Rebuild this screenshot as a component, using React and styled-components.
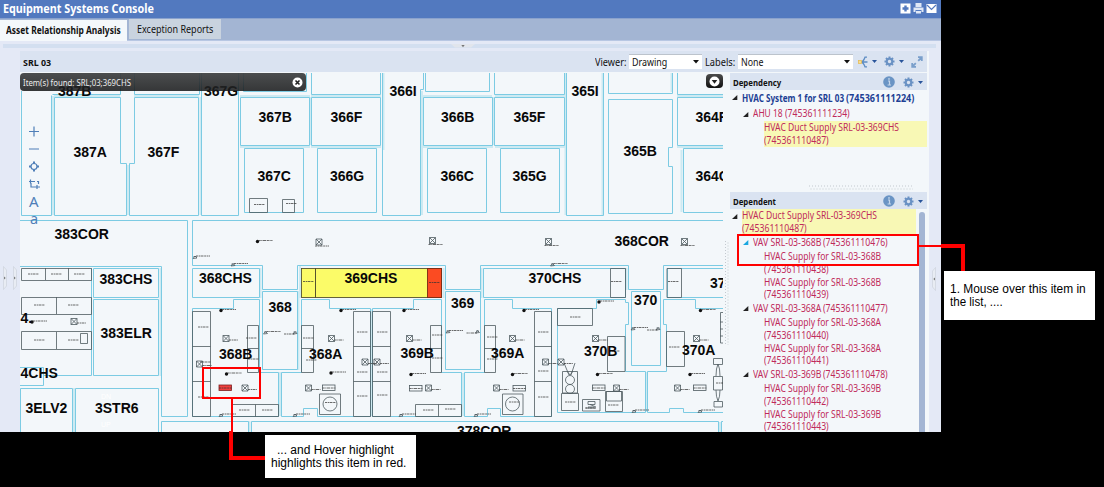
import React, { useLayoutEffect, useRef } from "react";
import styled, { createGlobalStyle } from "styled-components";

const Global = createGlobalStyle`
  * { box-sizing: border-box; }
  html, body { margin: 0; height: 487px; background: #000; overflow: hidden; }
  body { font-family: "Noto Sans", "Open Sans", sans-serif; font-size: 10.2px; color: #111; }
`;

/* Condensed text: set on one line and narrowed to the given width. */
const FitBox = styled.span`
  display: inline-block;
  width: ${(p) => p.$w}px;
  white-space: pre;
`;
const FitInner = styled.span`
  display: inline-block;
  transform-origin: 0 50%;
`;
const Fit = ({ w, children }) => {
  const ref = useRef(null);
  useLayoutEffect(() => {
    const el = ref.current;
    el.style.transform = `scaleX(${w / el.offsetWidth})`;
  }, [w, children]);
  return <FitBox $w={w}><FitInner ref={ref}>{children}</FitInner></FitBox>;
};

const Stage = styled.div`
  position: relative;
  width: 1104px;
  height: 487px;
  background: #000;
  overflow: hidden;
`;
const Console = styled.main`
  display: flex;
  flex-direction: column;
  width: 941px;
  height: 432px;
  overflow: hidden;
  background: #e4e9f6;
`;
const TitleBar = styled.header`
  display: flex;
  flex: none;
  align-items: center;
  height: 18px;
  padding: 0 4px 2px 3px;
  background: #5279bf;
  color: #fff;
`;
const Title = styled.h1`
  flex: 1;
  margin: 2px 0 0;
  font-size: 12.2px;
  line-height: 16px;
`;
const TitleIcons = styled.div`
  display: flex;
  gap: 2px;
  svg { display: block; }
`;
const Tabs = styled.nav`
  display: flex;
  flex: none;
  align-items: flex-end;
  gap: 2px;
  height: 23px;
  border-top: 1px solid #8aa2cd;
  border-bottom: 1px solid #b8c7e3;
  background: #a3b5d3;
`;
const Tab = styled.div`
  width: ${(p) => p.$w}px;
  height: ${(p) => (p.$active ? 21 : 20)}px;
  margin-bottom: ${(p) => (p.$active ? -1 : 1)}px;
  padding-left: ${(p) => (p.$active ? 6 : 8)}px;
  line-height: ${(p) => (p.$active ? 20 : 21)}px;
  font-weight: ${(p) => (p.$active ? 700 : 400)};
  white-space: nowrap;
  background: ${(p) => (p.$active ? "#f4f8fb" : "#c9d3df")};
`;
const TopSplitter = styled.div`
  display: flex;
  flex: none;
  justify-content: center;
  height: 4px;
  margin: 3px 5px 3px 3px;
  padding-right: 14px;
  background: #d3dff0;
`;
const Work = styled.div`
  display: flex;
  flex: 1;
  min-height: 0;
`;
const SideRail = styled.div`
  display: flex;
  flex: none;
  align-items: flex-start;
  justify-content: ${(p) => (p.$right ? "center" : "space-between")};
  width: ${(p) => (p.$right ? 12 : 20)}px;
  padding: ${(p) => (p.$right ? "216px 2px 0 0" : "215px 3px 0 3px")};
`;
const Content = styled.section`
  display: flex;
  flex-direction: column;
  width: 909px;
  background: #f3f7fa;
`;
const Toolbar = styled.div`
  display: flex;
  flex: none;
  align-items: center;
  width: 907px;
  height: 21px;
  padding: 0 4px 0 3px;
  background: #dae3f1;
`;
const DrawingName = styled.div`
  width: 572px;
  padding-top: 1px;
  font-size: 9.5px;
  font-weight: 700;
`;
const FieldLabel = styled.label`
  width: ${(p) => p.$w}px;
  padding-top: 1px;
  white-space: nowrap;
`;
const Select = styled.div`
  display: flex;
  align-items: center;
  justify-content: space-between;
  width: ${(p) => p.$w}px;
  height: 15px;
  margin-right: ${(p) => p.$mr}px;
  padding: 0 3px 0 3px;
  background: #fff;
  border-top: 1px solid #bcc3cc;
`;
const ToolIcons = styled.div`
  display: flex;
  flex: 1;
  align-items: center;
  justify-content: space-between;
`;
const Panes = styled.div`
  display: flex;
  flex: 1;
  min-height: 0;
  padding-top: 1px;
`;
const MapPane = styled.div`
  position: relative;
  width: 703px;
  height: 359px;
  overflow: hidden;
`;
const Toast = styled.div`
  position: absolute;
  left: 0;
  top: 0;
  display: flex;
  align-items: center;
  justify-content: space-between;
  width: 286px;
  height: 18px;
  padding: 0 3px;
  border-radius: 4px;
  color: #ececec;
  font-size: 9.3px;
  background: linear-gradient(rgba(66,68,69,.95), rgba(22,23,24,.86));
`;
const MapMenu = styled.div`
  position: absolute;
  left: 686px;
  top: 1px;
  display: flex;
  align-items: center;
  justify-content: center;
  width: 17px;
  height: 14px;
  border-radius: 4px;
  background: linear-gradient(#4c4c4c, #111);
`;
const MapTools = styled.div`
  position: absolute;
  left: 6px;
  top: 50px;
  display: flex;
  flex-direction: column;
  width: 16px;
  svg { display: block; }
`;
const VSplitter = styled.div`
  width: 7px;
  padding: 168px 0 0 1px;
`;
const TreePane = styled.div`
  display: flex;
  flex-direction: column;
  width: 199px;
`;
const PaneHeader = styled.div`
  display: flex;
  flex: none;
  align-items: center;
  justify-content: space-between;
  width: 197px;
  height: 17px;
  padding: 1px 4px 0 3px;
  font-size: 9.6px;
  font-weight: 700;
  background: #dae3f1;
`;
const HeaderIcons = styled.div`
  display: flex;
  align-items: center;
  gap: 8px;
`;
const HSplitter = styled.div`
  display: flex;
  flex: none;
  justify-content: center;
  align-items: flex-end;
  height: ${(p) => p.$h}px;
  padding: 0 0 2px 64px;
`;
const TreeBody = styled.div`
  display: flex;
  flex: 1;
  min-height: 0;
`;
const Tree = styled.div`
  width: ${(p) => p.$w}px;
`;
const Node = styled.div`
  display: flex;
  height: ${(p) => p.$h}px;
  padding-left: ${(p) => 2 + p.$level * 11}px;
  color: ${(p) => (p.$root ? "#1d3f94" : "#bf2a5b")};
  font-weight: ${(p) => (p.$root ? 700 : 400)};
`;
const Twisty = styled.span`
  flex: none;
  width: 9.5px;
  padding: 5px 0 0 0;
  svg { display: block; }
`;
const NodeText = styled.span`
  flex: 1;
  padding-top: ${(p) => p.$pt || 0}px;
  font-size: 10px;
  line-height: 12.67px;
  white-space: nowrap;
  background: ${(p) => (p.$hit ? "#f8f8b5" : "transparent")};
`;
const TextLine = styled.div`
  display: flex;
  height: 12.67px;
`;
const Scroll = styled.div`
  width: 6px;
  margin: 3px 0 0 3px;
  border-radius: 3px 3px 0 0;
  background: #a3b5d3;
`;
const Outline = styled.div`
  position: absolute;
  left: ${(p) => p.$x}px;
  top: ${(p) => p.$y}px;
  width: ${(p) => p.$w}px;
  height: ${(p) => p.$h}px;
  border: 2px solid #f00;
`;
const Connector = styled.div`
  position: absolute;
  left: ${(p) => p.$x}px;
  top: ${(p) => p.$y}px;
  width: ${(p) => p.$w}px;
  height: ${(p) => p.$h}px;
  background: #f00;
`;
const Callout = styled.div`
  position: absolute;
  left: ${(p) => p.$x}px;
  top: ${(p) => p.$y}px;
  width: ${(p) => p.$w}px;
  height: ${(p) => p.$h}px;
  padding: ${(p) => p.$pad};
  background: #fff;
  color: #000;
  font: 12px/13px "Liberation Sans", Arial, sans-serif;
  white-space: nowrap;
`;
const CalloutLine = styled.div`
  height: 13px;
  padding-left: ${(p) => p.$in || 0}px;
`;

/* ---------- icons ---------- */
const Caret = ({ c = "#111", w = 6 }) => (
  <svg width={w} height={w / 2 + 0.5} viewBox="0 0 6 3.5"><path d="M0 0H6L3 3.5Z" fill={c} /></svg>
);
const Gear = () => (
  <svg width="11" height="11" viewBox="-5.5 -5.5 11 11">
    <g stroke="#6a92c4" strokeWidth="2">
      <path d="M0-5V5M-5 0H5M-3.5-3.5L3.5 3.5M-3.5 3.5L3.5-3.5" />
    </g>
    <circle r="2.7" fill="#dae3f1" stroke="#6a92c4" strokeWidth="2" />
  </svg>
);
const GearMenu = styled.span`
  display: flex;
  align-items: center;
  gap: 4px;
`;
const Info = () => (
  <svg width="12" height="12" viewBox="0 0 12 12">
    <circle cx="6" cy="6" r="5.8" fill="#6a94c4" />
    <path d="M5 5H6.5V8.7M4.6 9H8" stroke="#c5d6ea" strokeWidth="1.2" fill="none" />
    <rect x="5.2" y="2.2" width="1.6" height="1.5" fill="#c5d6ea" />
  </svg>
);
const Relations = () => (
  <svg width="10" height="12" viewBox="0 0 10 12">
    <path d="M2.5 6H9.5M3 6Q5.5 5.5 7 1.2H9M3 6Q5.5 6.5 7 10.8H9" fill="none" stroke="#5e8dc3" strokeWidth="1.3" />
    <rect x=".5" y="4.5" width="3" height="3" fill="#f7dc93" stroke="#e5bd59" strokeWidth=".8" />
  </svg>
);
const Expand = () => (
  <svg width="12" height="12" viewBox="0 0 12 12" fill="none" stroke="#7a9fcb" strokeWidth="1.8">
    <path d="M7 1.2H10.8V5M10.5 1.5L7.2 4.8M1.2 7V10.8H5M1.5 10.5L4.8 7.2" />
  </svg>
);
const TwistyIcon = ({ c = "#222" }) => (
  <svg width="6" height="5" viewBox="0 0 6 5"><path d="M5.3 0V5H0Z" fill={c} /></svg>
);
const RailHandle = ({ left }) => (
  <svg width="4" height="24" viewBox="0 0 4 24">
    <path d={left ? "M3.5.5V23.5L.5 20V4Z" : "M.5.5V23.5L3.5 20V4Z"} fill="#e8ecf3" stroke="#cdd3dd" strokeWidth=".7" />
    <path d={left ? "M3 10.5V13.5L1.3 12Z" : "M1 10.5V13.5L2.7 12Z"} fill="#777" />
  </svg>
);

/* ---------- floor plan ---------- */
const ROOMS = [
  "M21.5 91V215.5H51.5V95.5M52.5 94.5H120.5V73", "M54.5 97.5H120.5V163.5H126.5V215.5H54.5Z",
  "M134.5 97.5H198.5V215.5H129.5V163.5H134.5Z", "M134.5 73V94.5H199.5V73", "M201.5 73V215.5H238.5V73",
  "M240.5 97.5H309.5V145.5H240.5Z", "M243.5 73V91.5H306.5V73", "M311.5 97.5H380.5V145.5H311.5Z",
  "M311.5 73V94.5H380.5V73", "M244.5 148.5H303.5V212.5H244.5Z", "M317.5 148.5H376.5V212.5H317.5Z",
  "M382.5 73V215.5H420.5V89.5H423.5V73", "M423.5 97.5H492.5V145.5H423.5Z", "M425.5 73V91.5H489.5V73",
  "M494.5 97.5H564.5V145.5H494.5Z", "M494.5 73V94.5H564.5V73", "M427.5 148.5H486.5V212.5H427.5Z",
  "M500.5 148.5H559.5V212.5H500.5Z", "M566.5 73V215.5H603.5V73", "M608.5 73V93.5H672.5V73",
  "M608.5 99.5H672.5V147.5H668.5V166.5H672.5V213.5H608.5Z", "M677.5 73V94.5H724", "M724 97.5H677.5V145.5H724",
  "M724 148.5H683.5V212.5H724",
  "M20 220.5H187.5V416.5H161.5V266.5H20",
  "M724 220.5H192.5V265.5H262.5V289.5H297.5V265.5H445.5V289.5H480.5V265.5H628.5V289.5H663.5V265.5H724",
  "M192.5 268.5H259.5V297.5H192.5Z", "M93.5 268.5H158.5V297.5H93.5Z", "M93.5 299.5H158.5V375.5H93.5Z",
  "M91.5 268V375.5H43.5", "M20 367.5H43.5V385.5H20", "M20.5 432V388.5H72.5V432", "M75.5 432V388.5H158.5V432",
  "M161.5 432V421.5H248.5V432M251.5 432V421.5H718.5V432M723 421.5H721.5V432",
  "M262.5 291.5H297.5V369.5H262.5Z",
  "M192.5 308.5H233.5V299.5H259.5V372.5H278.5V416.5H192.5Z",
  "M301.5 372.5V299.5H329.5V308.5H370.5V416.5H317.5V408.5H303.5V416.5H281.5V372.5H301.5",
  "M372.5 308.5H413.5V299.5H441.5V372.5H461.5V416.5H372.5Z",
  "M445.5 291.5H480.5V369.5H445.5Z",
  "M484.5 372.5V299.5H512.5V308.5H551.5V416.5H500.5V408.5H487.5V416.5H464.5V372.5H484.5",
  "M483.5 268.5H625.5V297.5H483.5Z", "M724 268.5H667.5V297.5H724",
  "M557.5 308.5H596.5V299.5H625.5V302.5H628.5V324.5H625.5V371.5H645.5V412.5H557.5Z",
  "M631.5 291.5H660.5V365.5H631.5Z",
  "M724 308.5H695.5V299.5H663.5V324.5H666.5V371.5H647.5V412.5H669.5V408.5H683.5V412.5H724",
];
const WALLS =
  "M53 96V215M200.5 97V215M128 165V215M54 96H120M134 96H199M240 96H310M311 96H381M310.5 97V145M240 147H310M311 147H381M422 91V215M423 96H492M495 96H565M493.5 97V145M423 147H493M495 147H565M383.5 73V150M565.5 73V215M602.5 73V215M671.5 73V92M677 96H723M677 147H723M681.5 150V212M74 388V432M160.5 268V376M249.5 421V432M280 372V416M463 373V416M646.5 372V412M298.5 291V370M260.5 268V298M300 266V298M481.5 268V298M626.5 268V290M443.5 268V298M720 422V432M371.5 309V416";
const FURNITURE =
  "M21.5 268.5H91.5V280.5H21.5ZM45.5 268V280M68.5 268V280M21.5 297.5H91.5V314.5H21.5ZM56.5 297V314M21.5 331.5H91.5V349.5H21.5ZM56.5 332V349M80.5 333.5H87.5V343.5H80.5Z" +
  "M249.5 198.5H267.5V212.5H249.5ZM282.5 199.5H294.5V212.5H282.5Z" +
  "M192.5 311.5H210.5V416.5H192.5ZM192.5 346.5H210.5M192.5 381.5H210.5M247.5 325.5H258.5V372.5H247.5ZM247.5 348.5H258.5" +
  "M301.5 325.5H313.5V372.5H301.5ZM301.5 348.5H313.5M353.5 311.5H370.5V416.5H353.5ZM353.5 346.5H370.5M353.5 381.5H370.5" +
  "M372.5 311.5H390.5V416.5H372.5ZM372.5 346.5H390.5M372.5 381.5H390.5M430.5 325.5H441.5V372.5H430.5ZM430.5 348.5H441.5" +
  "M484.5 325.5H495.5V372.5H484.5ZM484.5 348.5H495.5M534.5 311.5H551.5V416.5H534.5ZM534.5 346.5H551.5M534.5 381.5H551.5" +
  "M232.5 404.5H278.5V416.5H232.5ZM255.5 404.5V416.5M415.5 404.5H461.5V416.5H415.5ZM438.5 404.5V416.5" +
  "M319.5 394H340.5V414.5H319.5ZM502.5 394H523V414.5H502.5Z" +
  "M557.5 308.5H592.5V325.5H557.5ZM607.5 336.5H625V371.5H607.5ZM666.5 331.5H684.5V366.5H666.5Z" +
  "M610.5 268.5H625.5V297.5H610.5ZM667 268.5H681.5V297.5H667Z" +
  "M562.5 371.5H577.5V393H562.5ZM561.5 393.5H578.5V410.5H561.5ZM564 363L569 375M575 363L571 375M567 371L570 375L573 371" +
  "M582.5 399.5H600V411H582.5ZM605.5 391.5H622.5V411.5H605.5ZM606.5 391.5H621.5V401H606.5ZM588 401.5H595V404.5H588ZM586 408H596M590 404.5L596 407M588 407H594" +
  "M713.5 358.5H722.5V364.5H713.5ZM713.5 376.5H722.5V390H713.5ZM714 401.5H722.5V407H714ZM716 376Q716 368 718 364Q720 368 720 376M716 390Q716 397 718 401Q720 397 720 390" +
  "M723 312.5H720.5V343H723M720 322H723M720 329H723M720 336H723";
const SQUARES = [
  [319, 242], [432.5, 240.5], [548.5, 241.5], [684.5, 241.5], [226, 338.5], [331.5, 338.5], [74, 321.5],
  [199.5, 364], [245, 388], [308.5, 388], [409.5, 338.5], [512.5, 338.5], [595.5, 338.5], [696.5, 338.5],
  [377, 362], [365, 362], [428.5, 388], [496.5, 388], [545.5, 362], [561, 362], [616.5, 388], [677.5, 388],
];
const DOTS = [
  [257.5, 241.5], [221, 310.5], [341, 310.5], [404, 310.5], [524, 310.5], [599, 302], [700.5, 310.5], [32, 322],
  [226.5, 374], [331, 373], [411, 374.5], [512.5, 374.5], [597.5, 374.5], [690, 374.5],
];
const VALVES = [
  [195, 257.5], [233, 265], [552.5, 265], [265.5, 333], [295, 333], [448, 332], [477.5, 332], [633, 329], [658, 329],
  [221, 415.5], [295, 415.5], [401, 415.5], [476, 415.5], [634, 411.5], [700, 411.5],
];
const UNITS = [[219, 385], [322.5, 385], [409.5, 385.5], [513, 385.5], [592.5, 385], [693.5, 385]];
const TAGS = [
  [28, 274], [51, 274], [74, 274], [34, 305], [68, 305], [34, 340], [68, 340], [254, 204.5], [286, 203.5],
  [198, 327], [198, 397], [200, 362], [246, 338], [248, 359], [303, 338], [306, 360], [357, 332], [357, 372], [357, 396],
  [377, 332], [377, 372], [377, 395], [432, 335], [432, 358], [487, 337], [487, 359], [538, 332], [538, 371], [538, 397],
  [239, 410], [262, 410], [423, 410], [445, 409], [570, 317], [609, 351], [669, 347], [303, 281.5], [429, 282.5],
  [611, 281.5], [668, 281.5], [325, 402.5], [509, 402], [565, 402], [585, 408], [608, 405], [716, 383],
];
const LABELS = [
  ["387B", 58, 96], ["367G", 204, 96], ["367B", 258.5, 122], ["366F", 330.5, 122], ["387A", 73.5, 157], ["367F", 147.5, 157],
  ["367C", 257.5, 180.5], ["366G", 330, 180.5], ["366I", 389.5, 96], ["365I", 571.5, 96], ["366B", 441, 122],
  ["365F", 513.5, 122], ["364F", 695.5, 122], ["365B", 623.5, 156], ["366C", 440.5, 180.5], ["365G", 512.5, 180.5],
  ["364C", 695.5, 180.5], ["383COR", 54.5, 238.5], ["368COR", 614.5, 245.5], ["383CHS", 99.5, 283.5], ["368CHS", 199, 283],
  ["369CHS", 344.5, 283], ["370CHS", 528.5, 283], ["371CHS", 710, 287.5], ["368", 268.5, 312], ["369", 451, 307.5],
  ["370", 634, 305], ["4.", 20.5, 323], ["383ELR", 100.5, 338], ["368B", 219, 358.5], ["368A", 309, 358.5],
  ["369B", 400.5, 358], ["369A", 491, 358], ["370B", 584, 356], ["370A", 682, 354.5], ["4CHS", 20.5, 378],
  ["3ELV2", 25.5, 412.5], ["3STR6", 95, 412.5], ["378COR", 457, 435.5],
];
const Plan = styled.svg`
  display: block;
  .room { fill: none; stroke: #7ccbe3; }
  .wall { fill: none; stroke: #cdeaf2; stroke-width: 2; }
  .furn { fill: none; stroke: #4e5a60; stroke-width: .8; }
  .tag { stroke: #333; stroke-width: .9; stroke-dasharray: 2.2 .6 1.2 .5 3 .7; opacity: .8; }
  text { font: bold 14px "Liberation Sans", Arial, sans-serif; fill: #080808; }
  .stairs { font: 7px "Liberation Sans", Arial, sans-serif; fill: #fff; }
`;
const FloorPlan = () => (
  <Plan width="703" height="359" viewBox="20 73 703 359">
    <path className="wall" d={WALLS} />
    <rect x="301.5" y="268.5" width="140" height="29" fill="#fbfb68" stroke="#55522e" strokeWidth=".9" />
    <rect x="427.5" y="268.5" width="14" height="29" fill="#fb4b22" stroke="#7a2b13" strokeWidth=".9" />
    <path d="M315.5 268V298" stroke="#55522e" />
    {ROOMS.map((d) => <path key={d} className="room" d={d} />)}
    <path className="furn" d={FURNITURE} />
    <g className="furn">
      <circle cx="330" cy="404" r="7" /><circle cx="512.5" cy="404" r="7" />
      <circle cx="570" cy="380" r="4.5" /><circle cx="570" cy="389" r="4.5" />
      {SQUARES.map(([x, y]) => (
        <path key={x + "-" + y} d={`M${x - 3} ${y - 3}h6v6h-6zl6 6m0-6l-6 6`} />
      ))}
      {VALVES.map(([x, y]) => (
        <path key={x + "-" + y} d={`M${x - 2} ${y + 1}l2-2.5 2 2zM${x - 1.5} ${y - 1}h3`} />
      ))}
    </g>
    {UNITS.map(([x, y], i) => (
      <rect key={x} x={x} y={y} width="12.5" height="5.5" fill={i ? "none" : "#f0403f"} stroke={i ? "#4e5a60" : "#7c2020"} strokeWidth=".8" />
    ))}
    {DOTS.map(([x, y]) => <circle key={x + "-" + y} cx={x} cy={y} r="1.7" fill="#111" />)}
    <g className="tag">
      {TAGS.map(([x, y]) => <path key={x + "-" + y} d={`M${x} ${y}h11`} />)}
      {SQUARES.map(([x, y], i) => <path key={x + "-" + y} d={i < 4 ? `M${x - 4} ${y + 4}h14` : `M${x + 3} ${y + 1.5}h9`} />)}
      {DOTS.map(([x, y]) => <path key={x + "-" + y} d={`M${x + 1} ${y - 1}h14`} />)}
      {VALVES.map(([x, y]) => <path key={x + "-" + y} d={[295, 477.5, 658].includes(x) && y < 340 ? `M${x - 11} ${y + 1}h11` : `M${x + 1} ${y - 1.5}h14`} />)}
      {UNITS.map(([x, y]) => <path key={x} d={`M${x} ${y + 3}h13`} />)}
    </g>
    {LABELS.map(([t, x, y]) => <text key={t} x={x} y={y}>{t}</text>)}
    <text className="stairs" x="101" y="399">DN</text>
    <text className="stairs" x="101" y="427">UP</text>
  </Plan>
);

/* ---------- trees: each line is a list of [text, width] runs ---------- */
const DUCT = [[["HVAC Duct Supply SRL-03-369CHS", 135]], [["(745361110487)", 65]]];
const DEPENDENCY = [
  { level: 0, h: 17, root: true, open: true, pt: 2, lines: [[["HVAC System 1 for SRL 03 ", 104], ["(745361111224)", 68]]] },
  { level: 1, h: 14, open: true, lines: [[["AHU 18 ", 32], ["(745361111234)", 65]]] },
  { level: 2, h: 26, hit: true, lines: DUCT },
];
const leaf = (room, id) => ({ level: 2, h: 25.33, lines: [[[`HVAC Supply for SRL-03-${room}`, 117]], [[`(${id})`, 65]]] });
const vav = (room, id, hot) => ({ level: 1, h: 15.3, open: true, hot, pt: 1, lines: [[[`VAV SRL-03-${room} `, 70.5], [`(${id})`, 65]]] });
const DEPENDENT = [
  { level: 0, h: 26, open: true, hit: true, lines: DUCT },
  vav("368B", "745361110476", true), leaf("368B", "745361110438"), leaf("368B", "745361110439"),
  vav("368A", "745361110477"), leaf("368A", "745361110440"), leaf("368A", "745361110441"),
  vav("369B", "745361110478"), leaf("369B", "745361110442"), leaf("369B", "745361110443"),
];
const TreeView = ({ items, w }) => (
  <Tree $w={w}>
    {items.map((n, i) => (
      <Node key={i} $h={n.h} $level={n.level} $root={n.root}>
        <Twisty>{n.open && <TwistyIcon c={n.hot ? "#1aa7e0" : "#222"} />}</Twisty>
        <NodeText $hit={n.hit} $pt={n.pt}>
          {n.lines.map((runs, k) => (
            <TextLine key={k}>{runs.map(([t, tw]) => <Fit key={t} w={tw}>{t}</Fit>)}</TextLine>
          ))}
        </NodeText>
      </Node>
    ))}
  </Tree>
);
const PaneTitle = ({ w, children }) => (
  <PaneHeader>
    <Fit w={w}>{children}</Fit>
    <HeaderIcons><Info /><GearMenu><Gear /><Caret w={5} c="#29549a" /></GearMenu></HeaderIcons>
  </PaneHeader>
);

export default function App() {
  return (
    <Stage>
      <Global />
      <Console>
        <TitleBar>
          <Title><Fit w={151}>Equipment Systems Console</Fit></Title>
          <TitleIcons>
            <svg width="11" height="11" viewBox="0 0 11 11"><rect x=".5" y=".5" width="10" height="10" fill="#fff" /><path d="M5.5 2.5V8.5M2.5 5.5H8.5" stroke="#5279bf" strokeWidth="2.4" /></svg>
            <svg width="11" height="11" viewBox="0 0 11 11"><path d="M2.5 0H8.5V4H2.5ZM.5 4.5H10.5V9H8.5V7H2.5V9H.5ZM3 8H8V10.5H3Z" fill="#dfe8f6" /></svg>
            <svg width="11" height="11" viewBox="0 0 11 11"><rect x=".5" y="1" width="10" height="9" fill="#fff" /><path d="M1 2L5.5 6.5L10 2" fill="none" stroke="#5279bf" strokeWidth="1.2" /></svg>
          </TitleIcons>
        </TitleBar>
        <Tabs>
          <Tab $active $w={127}><Fit w={115}>Asset Relationship Analysis</Fit></Tab>
          <Tab $w={92}><Fit w={76}>Exception Reports</Fit></Tab>
        </Tabs>
        <TopSplitter><svg width="24" height="4" viewBox="0 0 24 4"><path d="M0 0H24L20 3.5H4Z" fill="#e1e5ec" /><path d="M10.3 1H13.7L12 3.2Z" fill="#777" /></svg></TopSplitter>
        <Work>
          <SideRail><RailHandle /><RailHandle /></SideRail>
          <Content>
            <Toolbar>
              <DrawingName><Fit w={28}>SRL 03</Fit></DrawingName>
              <FieldLabel $w={34}><Fit w={31.5}>Viewer:</Fit></FieldLabel>
              <Select $w={73} $mr={3}><Fit w={35}>Drawing</Fit><Caret /></Select>
              <FieldLabel $w={33}><Fit w={30}>Labels:</Fit></FieldLabel>
              <Select $w={115} $mr={5}><Fit w={22.5}>None</Fit><Caret /></Select>
              <ToolIcons>
                <GearMenu><Relations /><Caret w={5} c="#29549a" /></GearMenu>
                <GearMenu><Gear /><Caret w={5} c="#29549a" /></GearMenu>
                <Expand />
              </ToolIcons>
            </Toolbar>
            <Panes>
              <MapPane>
                <FloorPlan />
                <Toast>
                  <Fit w={108}>Item(s) found: SRL;03;369CHS</Fit>
                  <svg width="11" height="11" viewBox="0 0 11 11"><circle cx="5.5" cy="5.5" r="5" fill="#fff" /><path d="M3.5 3.5L7.5 7.5M7.5 3.5L3.5 7.5" stroke="#222" strokeWidth="1.6" /></svg>
                </Toast>
                <MapMenu><svg width="11" height="11" viewBox="0 0 11 11"><circle cx="5.5" cy="5.5" r="5" fill="#fff" /><path d="M2.7 4H8.3L5.5 7.7Z" fill="#222" /></svg></MapMenu>
                <MapTools>
                  <svg width="16" height="102" viewBox="26 123 16 102" fill="none" stroke="#4f7fb8" strokeWidth="1.2">
                    <path d="M34 126.5V136.5M29 131.5H39M29 149H39" />
                    <circle cx="34" cy="166.5" r="3" /><path d="M34 161.5V163.5M34 169.5V171.5M29 166.5H31M37 166.5H39" strokeWidth="2" />
                    <path d="M29 181.5H35M37 181.5H38.5V184M31 183V187H35M30.5 179.5V183.5M37 185V189M35 187H40" />
                    <text x="29" y="207" fill="#4f7fb8" stroke="none" fontSize="15" fontFamily="Noto Sans, sans-serif">A</text>
                    <text x="30" y="224" fill="#4f7fb8" stroke="none" fontSize="14.5" fontFamily="Noto Sans, sans-serif">a</text>
                  </svg>
                </MapTools>
              </MapPane>
              <VSplitter>
                <svg width="5" height="104" viewBox="0 0 5 104"><path d="M1.5 0V104M4 1.5V104" stroke="#c3c9cf" strokeDasharray="1 2" fill="none" /></svg>
              </VSplitter>
              <TreePane>
                <PaneTitle w={48}>Dependency</PaneTitle>
                <TreeView items={DEPENDENCY} w={197} />
                <HSplitter $h={45}><svg width="106" height="5" viewBox="0 0 106 5"><path d="M0 1H104M1.5 4H104" stroke="#c3c9cf" strokeDasharray="1 2" /></svg></HSplitter>
                <PaneTitle w={43}>Dependent</PaneTitle>
                <TreeBody><TreeView items={DEPENDENT} w={186} /><Scroll /></TreeBody>
              </TreePane>
            </Panes>
          </Content>
          <SideRail $right><RailHandle left /></SideRail>
        </Work>
      </Console>
      <Outline $x={202} $y={367} $w={59} $h={32} />
      <Connector $x={231} $y={399} $w={2} $h={33} />
      <Connector $x={229} $y={431} $w={4} $h={29} />
      <Connector $x={231} $y={456} $w={34} $h={4} />
      <Callout $x={265} $y={435} $w={151} $h={43} $pad="9px 0 0 6px">
        <CalloutLine $in={6}><Fit w={117}>... and Hover highlight</Fit></CalloutLine>
        <CalloutLine><Fit w={135}>highlights this item in red.</Fit></CalloutLine>
      </Callout>
      <Outline $x={737} $y={234} $w={182} $h={32} />
      <Connector $x={919} $y={245} $w={22} $h={2} />
      <Connector $x={941} $y={244} $w={24} $h={4} />
      <Connector $x={961} $y={244} $w={4} $h={28} />
      <Callout $x={944} $y={271} $w={151} $h={49} $pad="12px 0 0 6px">
        <CalloutLine><Fit w={136}>1. Mouse over this item in</Fit></CalloutLine>
        <CalloutLine><Fit w={53}>the list, ....</Fit></CalloutLine>
      </Callout>
    </Stage>
  );
}
